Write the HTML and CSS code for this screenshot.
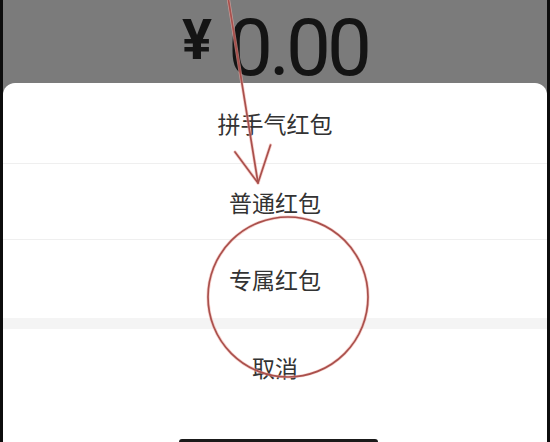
FILE: index.html
```html
<!DOCTYPE html>
<html lang="zh-CN">
<head>
<meta charset="utf-8">
<title>红包类型</title>
<link rel="stylesheet" href="styles.css">
</head>
<body>
  <div class="screen">
    <div class="amount-bar">
      <span class="yen">¥</span>
      <span class="amount">0.00</span>
    </div>
    <div class="sheet">
      <div class="option first">拼手气红包</div>
      <div class="option">普通红包</div>
      <div class="option last">专属红包</div>
      <div class="gap"></div>
      <div class="option cancel">取消</div>
      <div class="home-bar"></div>
    </div>
  </div>
  <svg class="annotation" width="550" height="442" viewBox="0 0 550 442" xmlns="http://www.w3.org/2000/svg">
    <g fill="none" stroke-linecap="round" stroke-linejoin="round">
      <g stroke="#f2b0aa" stroke-width="3.2" opacity="0.6">
        <path d="M228.5 0 L258 183"/>
        <path d="M235 152 L258 183 L270.5 145"/>
        <circle cx="288" cy="297" r="80"/>
      </g>
      <g stroke="#a9504c" stroke-width="1.7">
        <path d="M228.5 0 L258 183"/>
        <path d="M235 152 L258 183 L270.5 145"/>
        <circle cx="288" cy="297" r="80"/>
      </g>
    </g>
  </svg>
</body>
</html>
```
FILE: styles.css
```css
html, body {
  margin: 0;
  padding: 0;
}

body {
  width: 550px;
  height: 442px;
  background: #0d0d0d;
  position: relative;
  overflow: hidden;
  font-family: "Noto Sans CJK SC", "Noto Sans", sans-serif;
}

.screen {
  margin: 0 3px;
  height: 442px;
  background: #7b7b7b;
  display: flex;
  flex-direction: column;
}

.amount-bar {
  height: 83px;
  flex: none;
  display: flex;
  justify-content: center;
  align-items: flex-start;
  gap: 16px;
  color: #141414;
  font-family: Roboto, "Liberation Sans", sans-serif;
}

.yen {
  font-weight: 700;
  font-size: 56px;
  line-height: 1.2;
  margin-top: 7px;
}

.amount {
  font-weight: 400;
  font-size: 80px;
  line-height: 0.85;
  margin-top: 14px;
  letter-spacing: -4px;
}

.sheet {
  flex: 1;
  background: #ffffff;
  border-radius: 12px 12px 0 0;
  display: flex;
  flex-direction: column;
}

.option {
  flex: none;
  height: 75px;
  display: flex;
  align-items: center;
  justify-content: center;
  font-size: 23px;
  color: #333333;
  border-bottom: 1px solid #efefef;
}

.option.first {
  height: 80px;
}

.option.last {
  height: 78px;
  border-bottom: none;
}

.gap {
  flex: none;
  height: 11px;
  background: #f4f4f4;
}

.option.cancel {
  height: 76px;
  border-bottom: none;
}

.home-bar {
  margin-top: auto;
  align-self: center;
  width: 199px;
  height: 4px;
  margin-bottom: -1px;
  margin-left: 6px;
  background: #1a1a1a;
  border-radius: 3px 3px 0 0;
}

.annotation {
  position: absolute;
  left: 0;
  top: 0;
  pointer-events: none;
}
```
